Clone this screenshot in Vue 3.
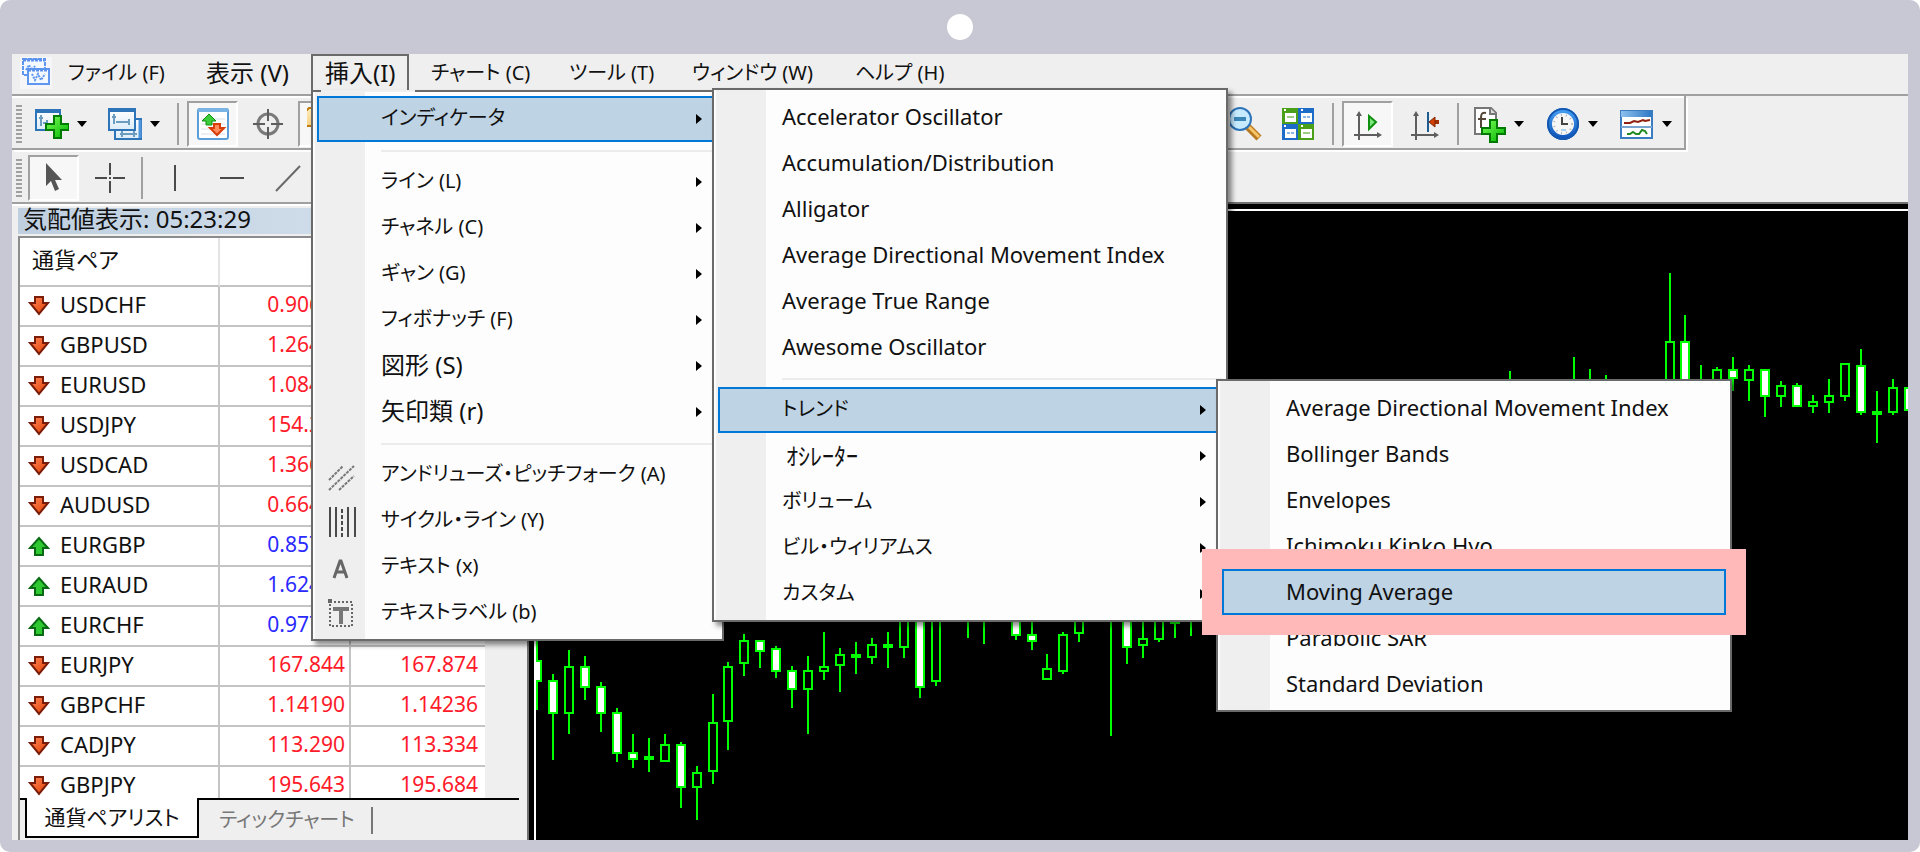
<script setup>
const menus = ['ファイル (F)', '表示 (V)', '挿入(I)', 'チャート (C)', 'ツール (T)', 'ウィンドウ (W)', 'ヘルプ (H)']

const insertMenu = [
  { label: 'インディケータ', sub: true, active: true },
  { sep: true },
  { label: 'ライン (L)', sub: true },
  { label: 'チャネル (C)', sub: true },
  { label: 'ギャン (G)', sub: true },
  { label: 'フィボナッチ (F)', sub: true },
  { label: '図形 (S)', sub: true },
  { label: '矢印類 (r)', sub: true },
  { sep: true },
  { label: 'アンドリューズ・ピッチフォーク (A)', icon: 'pitchfork' },
  { label: 'サイクル・ライン (Y)', icon: 'cycle' },
  { label: 'テキスト (x)', icon: 'letter' },
  { label: 'テキストラベル (b)', icon: 'label' },
]

const indicatorMenu = [
  { label: 'Accelerator Oscillator' },
  { label: 'Accumulation/Distribution' },
  { label: 'Alligator' },
  { label: 'Average Directional Movement Index' },
  { label: 'Average True Range' },
  { label: 'Awesome Oscillator' },
  { sep: true },
  { label: 'トレンド', sub: true, active: true },
  { label: 'ｵｼﾚｰﾀｰ', sub: true, small: true },
  { label: 'ボリューム', sub: true },
  { label: 'ビル・ウィリアムス', sub: true },
  { label: 'カスタム', sub: true },
]

const trendMenu = [
  'Average Directional Movement Index',
  'Bollinger Bands',
  'Envelopes',
  'Ichimoku Kinko Hyo',
  'Moving Average',
  'Parabolic SAR',
  'Standard Deviation',
]

// kanji labels are set larger than katakana labels
const script = (text) => (/[\u4e00-\u9fff]/.test(text) ? 'kanji' : /[\u30a0-\u30ff]/.test(text) ? 'kana' : '')

const toolsLeft = [
  { icon: 'newchart', name: '新規チャート', split: true, w: 73 },
  { icon: 'profile', name: '組表示', split: true, w: 73 },
  { sep: true },
  { icon: 'market', name: '気配値表示', on: true, w: 51 },
  { icon: 'target', name: 'データウィンドウ', w: 60 },
  { icon: 'folder', name: 'ナビゲーター', on: true, w: 51 },
]
const toolsRight = [
  { icon: 'zoomout', name: '縮小', w: 50 },
  { icon: 'tile', name: '整列', w: 52 },
  { sep: true, wide: true },
  { icon: 'autoscroll', name: '自動スクロール', on: true, w: 51 },
  { icon: 'shift', name: 'チャートシフト', w: 63 },
  { sep: true },
  { icon: 'indicators', name: 'インディケータリスト', split: true, w: 74 },
  { icon: 'clock', name: '周期設定', split: true, w: 74 },
  { icon: 'template', name: '定型チャート', split: true, w: 70 },
]
const drawTools = [
  { icon: 'cursor', name: 'カーソル', on: true, w: 51 },
  { icon: 'cross', name: '十字カーソル', w: 61 },
  { sep: true },
  { icon: 'vline', name: '垂直線', w: 48 },
  { icon: 'hline', name: '水平線', w: 66 },
  { icon: 'dline', name: 'トレンドライン', w: 46 },
]

const quotes = [
  ['USDCHF', '0.90645', '0.90672', 0],
  ['GBPUSD', '1.26482', '1.26510', 0],
  ['EURUSD', '1.08415', '1.08432', 0],
  ['USDJPY', '154.242', '154.260', 0],
  ['USDCAD', '1.36645', '1.36670', 0],
  ['AUDUSD', '0.66425', '0.66448', 0],
  ['EURGBP', '0.85712', '0.85734', 1],
  ['EURAUD', '1.62415', '1.62450', 1],
  ['EURCHF', '0.97741', '0.97773', 1],
  ['EURJPY', '167.844', '167.874', 0],
  ['GBPCHF', '1.14190', '1.14236', 0],
  ['CADJPY', '113.290', '113.334', 0],
  ['GBPJPY', '195.643', '195.684', 0],
]

// slot, high, low, body top, body bottom, kind (w: filled, h: hollow, d: doji, l: wick only)
const candles = [
  [-1, 640, 710, 660, 682, 'w'], [0, 674, 760, 680, 714, 'w'], [1, 650, 734, 666, 714, 'h'],
  [2, 656, 700, 666, 688, 'w'], [3, 682, 732, 686, 714, 'w'], [4, 708, 762, 712, 754, 'w'],
  [5, 734, 768, 752, 760, 'w'], [6, 738, 772, 756, 760, 'd'], [7, 734, 762, 744, 762, 'h'],
  [8, 742, 808, 744, 788, 'w'], [9, 766, 820, 772, 788, 'h'], [10, 694, 784, 722, 772, 'h'],
  [11, 662, 750, 666, 722, 'h'], [12, 634, 676, 640, 664, 'h'], [13, 640, 668, 640, 652, 'w'],
  [14, 646, 678, 648, 672, 'w'], [15, 666, 708, 670, 690, 'w'], [16, 656, 734, 670, 690, 'h'],
  [17, 632, 680, 666, 672, 'h'], [18, 648, 692, 654, 666, 'h'], [19, 642, 674, 654, 658, 'd'],
  [20, 638, 664, 644, 658, 'h'], [21, 632, 668, 644, 648, 'd'], [22, 600, 658, 600, 648, 'h'],
  [23, 600, 698, 600, 688, 'w'], [24, 600, 686, 600, 682, 'h'], [26, 600, 638, 0, 0, 'l'],
  [27, 600, 644, 0, 0, 'l'], [29, 600, 640, 600, 636, 'w'], [30, 600, 650, 634, 642, 'w'],
  [31, 654, 680, 668, 680, 'h'], [32, 632, 674, 634, 672, 'h'], [33, 600, 642, 600, 634, 'h'],
  [35, 600, 736, 0, 0, 'l'], [36, 600, 664, 600, 648, 'w'], [37, 600, 658, 638, 646, 'h'],
  [38, 600, 642, 600, 640, 'h'], [39, 600, 638, 620, 624, 'd'], [40, 600, 636, 0, 0, 'l'],
  [60, 371, 400, 0, 0, 'l'], [64, 357, 400, 0, 0, 'l'], [65, 369, 400, 0, 0, 'l'],
  [66, 375, 400, 0, 0, 'l'], [70, 273, 400, 341, 395, 'h'], [71, 315, 400, 341, 395, 'w'],
  [72, 365, 400, 0, 0, 'l'], [73, 367, 400, 369, 395, 'h'], [74, 357, 391, 369, 379, 'w'],
  [75, 365, 401, 369, 381, 'h'], [76, 369, 417, 369, 397, 'w'], [77, 381, 407, 385, 397, 'h'],
  [78, 383, 407, 385, 407, 'w'], [79, 395, 413, 401, 407, 'h'], [80, 379, 413, 395, 403, 'h'],
  [81, 363, 401, 363, 397, 'h'], [82, 349, 415, 365, 413, 'w'], [83, 391, 443, 411, 415, 'd'],
  [84, 379, 415, 387, 413, 'h'], [85, 387, 413, 387, 411, 'w'],
].map(([i, hi, lo, top, bot, kind]) => ({ x: Math.round(553 + i * 15.95), hi, lo, top, bot, kind }))
const fills = { w: '#fff', h: '#000', d: '#0f0' }
// upper wick, then lower wick, so that hollow bodies stay empty
const wicks = (c) => (c.kind === 'l' ? [[c.hi, c.lo]] : [[c.hi, c.top], [c.bot, c.lo]])
</script>

<template>
  <svg class="sprite" width="0" height="0" aria-hidden="true">
    <defs>
      <linearGradient id="g-green" x1="0" y1="0" x2="1" y2="1"><stop offset="0" stop-color="#7dff5a" /><stop offset="1" stop-color="#00b400" /></linearGradient>
      <linearGradient id="g-sky" x1="0" y1="0" x2="0" y2="1"><stop offset="0" stop-color="#fff" /><stop offset="1" stop-color="#dcecf8" /></linearGradient>
      <linearGradient id="g-bar" x1="0" y1="0" x2="1" y2="0"><stop offset="0" stop-color="#8cc0ee" /><stop offset="1" stop-color="#2f78c4" /></linearGradient>
      <linearGradient id="g-rim" x1="0" y1="0" x2="0" y2="1"><stop offset="0" stop-color="#4aa3f5" /><stop offset="1" stop-color="#0a50b8" /></linearGradient>
      <linearGradient id="g-red" x1="0" y1="0" x2="1" y2="1"><stop offset="0" stop-color="#ff8a5a" /><stop offset="1" stop-color="#e03c00" /></linearGradient>
      <linearGradient id="g-gold" x1="0" y1="0" x2="1" y2="1"><stop offset="0" stop-color="#fff0c0" /><stop offset="1" stop-color="#f0b850" /></linearGradient>
    </defs>
    <symbol id="i-app" viewBox="0 0 32 32">
      <path d="M0 0h32v32H0z" fill="#f6f6f8" />
      <rect x="3" y="2" width="22" height="16" fill="#f4f8ff" stroke="#5f97f0" stroke-width="2" stroke-dasharray="4 1" /><path d="M3 3h22" stroke="#5a90ee" stroke-width="3" stroke-dasharray="3 1" />
      <path d="M6 13l3-5 3 5 3-4" fill="none" stroke="#5f97f0" stroke-width="2" stroke-dasharray="2 1" />
      <rect x="8" y="12" width="21" height="15" fill="#f4f8ff" stroke="#5f97f0" stroke-width="2" /><path d="M8 13h21" stroke="#5a90ee" stroke-width="3" stroke-dasharray="3 1" />
      <path d="M12 17l3 6 3-6 3 6 4-6" fill="none" stroke="#5f97f0" stroke-width="2" stroke-dasharray="2 1" />
    </symbol>
    <symbol id="i-newchart" viewBox="0 0 34 34">
      <rect x="1" y="3" width="24" height="20" fill="url(#g-sky)" stroke="#2e74b8" stroke-width="2" /><path d="M1 4h24" stroke="#2e74b8" stroke-width="4" />
      <path d="M6 8v11M4 11h4M8 16h5M12 13v6" stroke="#6c9cc0" stroke-width="2" />
      <path d="M19 9h7v8h8v6h-8v8h-7v-8h-8v-6h8z" fill="url(#g-green)" stroke="#007a00" stroke-width="2" />
    </symbol>
    <symbol id="i-profile" viewBox="0 0 34 34">
      <rect x="7" y="12" width="26" height="20" fill="url(#g-sky)" stroke="#2e74b8" stroke-width="2" /><path d="M32 13v18" stroke="#4d94dc" stroke-width="3" />
      <rect x="1" y="2" width="26" height="21" fill="url(#g-sky)" stroke="#2e74b8" stroke-width="2" /><path d="M1 3h26" stroke="#2e74b8" stroke-width="4" />
      <path d="M6 7v10M4 10h4M8 15h14M21 12v6M12 27h17M14 24v6M26 24v6" stroke="#6c9cc0" stroke-width="2" />
    </symbol>
    <symbol id="i-market" viewBox="0 0 34 34">
      <rect x="2" y="2" width="30" height="30" rx="2" fill="#fff" stroke="#5c9fd8" stroke-width="2" /><path d="M2 3h30" stroke="#7ab4e4" stroke-width="4" />
      <path d="M5 12h24M5 17h24M5 22h24M5 27h24" stroke="#d8dfe6" stroke-width="1" />
      <path d="M13 7l7 7h-4v4h-6v-4H6z" fill="#3ccc3c" stroke="#109010" /><path d="M21 28l-7-7h4v-4h6v4h4z" fill="#ff8a5a" stroke="#d83c08" stroke-width="2" />
    </symbol>
    <symbol id="i-target" viewBox="0 0 34 34">
      <circle cx="17" cy="17" r="10" fill="none" stroke="#7a7a7a" stroke-width="3" /><path d="M17 2v12M17 20v12M2 17h12M20 17h12" stroke="#5e5e5e" stroke-width="2" />
    </symbol>
    <symbol id="i-folder" viewBox="0 0 34 34">
      <path d="M-2 5l4-4h8l4 4h15v14H-2z" fill="url(#g-gold)" stroke="#bf7a10" stroke-width="2" />
    </symbol>
    <symbol id="i-zoomout" viewBox="0 0 34 34">
      <path d="M18 20l11 11" stroke="#b87820" stroke-width="7" /><path d="M19 20l10 10" stroke="#f8c468" stroke-width="3" />
      <circle cx="10" cy="12" r="11" fill="#c6eaff" stroke="#2e74b8" stroke-width="2" /><path d="M4 12h12" stroke="#3a86b8" stroke-width="4" />
    </symbol>
    <symbol id="i-tile" viewBox="0 0 34 34">
      <path d="M1 1h16v16H1zM17 17h16v16H17z" fill="#4aa018" /><path d="M17 1h16v16H17zM1 17h16v16H1z" fill="#1c6cc8" />
      <path d="M4 6h11v9H4zM20 6h11v9H20zM4 22h11v9H4zM20 22h11v9H20z" fill="#fff" />
      <path d="M6 10h7M22 26h7" stroke="#9ccc84" stroke-width="2" /><path d="M22 10h7M6 26h7" stroke="#88b8ec" stroke-width="2" stroke-dasharray="3 1" />
      <path d="M3 3h2M20 3h2M3 19h2M20 19h2" stroke="#fff" stroke-width="2" />
    </symbol>
    <symbol id="i-autoscroll" viewBox="0 0 34 34">
      <path d="M8 33V7M3 28h26" stroke="#5e5e5e" stroke-width="2" /><path d="M8 4l3 5H5zM31 28l-5-3v6z" fill="#5e5e5e" /><path d="M18 9l7 6-7 7z" fill="#7ce87c" stroke="#109010" stroke-width="2" />
    </symbol>
    <symbol id="i-shift" viewBox="0 0 34 34">
      <path d="M8 33V7M3 28h26" stroke="#5e5e5e" stroke-width="2" /><path d="M8 4l3 5H5zM31 28l-5-3v6z" fill="#5e5e5e" /><path d="M20 5v20" stroke="#1c5c90" stroke-width="2" /><path d="M31 15h-6" stroke="#a03000" stroke-width="4" /><path d="M21 15l6-5v10z" fill="#d04000" stroke="#802000" />
    </symbol>
    <symbol id="i-indicators" viewBox="0 0 34 38">
      <path d="M3 3h16l5 5v21H3z" fill="#fff" stroke="#777" stroke-width="2" /><path d="M18 3v6h6" fill="#ddd" stroke="#777" stroke-width="2" />
      <path d="M14 8c-5-1-5 2-5 6v9M6 14h8" fill="none" stroke="#554838" stroke-width="2" />
      <path d="M18 15h7v8h8v6h-8v8h-7v-8h-8v-6h8z" fill="url(#g-green)" stroke="#007a00" stroke-width="2" />
    </symbol>
    <symbol id="i-clock" viewBox="0 0 34 34">
      <circle cx="17" cy="17" r="16" fill="url(#g-rim)" /><circle cx="17" cy="17" r="15" fill="none" stroke="#1458b0" stroke-width="2" /><circle cx="17" cy="17" r="11" fill="#f6f6f6" />
      <circle cx="17" cy="17" r="9" fill="none" stroke="#b4b4b4" stroke-width="2" stroke-dasharray="1 4" /><path d="M16 10v7h6" fill="none" stroke="#444" stroke-width="2" /><path d="M15 23h5" stroke="#a8d4f4" stroke-width="2" />
    </symbol>
    <symbol id="i-template" viewBox="0 0 34 34">
      <rect x="1" y="4" width="31" height="27" fill="#fff" stroke="#3c7cc0" stroke-width="2" /><path d="M1 4h31v6H1z" fill="url(#g-bar)" /><path d="M1 20h31" stroke="#7aa4d0" stroke-width="2" />
      <path d="M4 16h6l4-2 4 1 5-2 2 1 5-1" fill="none" stroke="#902010" stroke-width="2" /><path d="M7 27h3l3-2 3 2h3l3-4 3 1 2 3" fill="none" stroke="#208a20" stroke-width="2" />
    </symbol>
    <symbol id="i-cursor" viewBox="0 0 34 34">
      <path d="M9 2v23l5-5 4 10 4-2-4-9h7z" fill="#555" />
    </symbol>
    <symbol id="i-cross" viewBox="0 0 34 34">
      <path d="M17 2v12M17 20v12M2 17h12M20 17h12M16 17h2" stroke="#4a4a4a" stroke-width="2" />
    </symbol>
    <symbol id="i-vline" viewBox="0 0 34 34"><path d="M17 4v26" stroke="#4a4a4a" stroke-width="2" /></symbol>
    <symbol id="i-hline" viewBox="0 0 34 34"><path d="M5 17h24" stroke="#4a4a4a" stroke-width="2" /></symbol>
    <symbol id="i-dline" viewBox="0 0 34 34"><path d="M5 30L29 5" stroke="#6a6a6a" stroke-width="2" /></symbol>
    <symbol id="i-pitchfork" viewBox="0 0 34 34"><path d="M4 22L18 8M4 32L29 8M14 32L29 18" stroke="#777" stroke-width="2" stroke-dasharray="3 1" /></symbol>
    <symbol id="i-cycle" viewBox="0 0 34 34"><path d="M5 3v30M11 3v30M23 3v30M30 3v30" stroke="#4a4a4a" stroke-width="2" /><path d="M17 5v28" stroke="#4a4a4a" stroke-width="2" stroke-dasharray="4 2" /></symbol>
    <symbol id="i-letter" viewBox="0 0 34 34"><path d="M9 28l6-17h1l6 17M11 22h9" fill="none" stroke="#666" stroke-width="3" /></symbol>
    <symbol id="i-label" viewBox="0 0 34 34">
      <rect x="5" y="6" width="22" height="24" fill="none" stroke="#666" stroke-width="2" stroke-dasharray="2 2" /><path d="M3 3h4v4H3z" fill="#666" /><path d="M8 13h16M16 13v15" stroke="#777" stroke-width="4" />
    </symbol>
    <symbol id="i-down" viewBox="0 0 24 22"><path d="M8 2h8v6h5L12 19 3 8h5z" fill="url(#g-red)" stroke="#7a1c08" stroke-width="2" /></symbol>
    <symbol id="i-up" viewBox="0 0 24 22"><path d="M8 20h8v-7h5L12 3 3 13h5z" fill="#30c830" stroke="#0a6a14" stroke-width="2" /></symbol>
  </svg>

  <div class="frame">
    <span class="camera"></span>
    <div class="window">
      <nav class="menubar">
        <svg class="logo" width="32" height="32"><use href="#i-app" /></svg>
        <div v-for="m in menus" :key="m" class="entry" :class="{ open: m === '挿入(I)' }">
          <button type="button" class="entry-btn" :class="script(m)">{{ m }}</button>
          <ul v-if="m === '挿入(I)'" class="menu menu-insert">
            <li v-for="(it, i) in insertMenu" :key="i" :class="it.sep ? 'rule' : 'row'">
              <button v-if="!it.sep" type="button" class="item" :class="{ active: it.active }">
                <span class="gut"><svg v-if="it.icon" width="34" height="34"><use :href="'#i-' + it.icon" /></svg></span>
                <span class="label" :class="script(it.label)">{{ it.label }}</span>
                <i v-if="it.sub" class="tri"></i>
              </button>
              <ul v-if="it.active" class="menu menu-indicator">
                <li v-for="(s, j) in indicatorMenu" :key="j" :class="s.sep ? 'rule' : 'row'">
                  <button v-if="!s.sep" type="button" class="item" :class="{ active: s.active }">
                    <span class="gut"></span>
                    <span class="label" :class="s.small ? 'half' : script(s.label)">{{ s.label }}</span>
                    <i v-if="s.sub" class="tri"></i>
                  </button>
                  <ul v-if="s.active" class="menu menu-trend">
                    <li v-for="t in trendMenu" :key="t" class="row">
                      <button type="button" class="item" :class="{ 'active marked': t === 'Moving Average' }">
                        <span class="gut"></span>
                        <span class="label">{{ t }}</span>
                      </button>
                    </li>
                  </ul>
                </li>
              </ul>
            </li>
          </ul>
        </div>
      </nav>

      <div class="toolbar main-tools">
        <div class="tools left">
          <i class="grip"></i>
          <template v-for="(t, i) in toolsLeft" :key="i">
            <i v-if="t.sep" class="sep"></i>
            <button v-else type="button" class="tool" :class="{ on: t.on, split: t.split }" :style="{ width: t.w + 'px' }" :aria-label="t.name">
              <svg width="34" height="34"><use :href="'#i-' + t.icon" /></svg><i v-if="t.split" class="caret"></i>
            </button>
          </template>
        </div>
        <div class="tools">
          <template v-for="(t, i) in toolsRight" :key="i">
            <i v-if="t.sep" class="sep" :class="{ wide: t.wide }"></i>
            <button v-else type="button" class="tool" :class="{ on: t.on, split: t.split }" :style="{ width: t.w + 'px' }" :aria-label="t.name">
              <svg width="34" :height="t.icon === 'indicators' ? 38 : 34"><use :href="'#i-' + t.icon" /></svg><i v-if="t.split" class="caret"></i>
            </button>
          </template>
        </div>
      </div>
      <div class="toolbar draw-tools">
        <i class="grip"></i>
        <template v-for="(t, i) in drawTools" :key="i">
          <i v-if="t.sep" class="sep"></i>
          <button v-else type="button" class="tool" :class="{ on: t.on }" :style="{ width: t.w + 'px' }" :aria-label="t.name">
            <svg width="34" height="34"><use :href="'#i-' + t.icon" /></svg>
          </button>
        </template>
      </div>

      <div class="work">
        <aside class="watch">
          <div class="title">気配値表示: 05:23:29</div>
          <div class="grid">
            <table>
              <thead><tr><th class="c-sym">通貨ペア</th><th class="c-bid">Bid</th><th class="c-ask">Ask</th></tr></thead>
              <tbody>
                <tr v-for="q in quotes" :key="q[0]" :class="q[3] ? 'up' : 'dn'">
                  <td class="sym"><span><svg width="24" height="22"><use :href="q[3] ? '#i-up' : '#i-down'" /></svg>{{ q[0] }}</span></td>
                  <td>{{ q[1] }}</td>
                  <td>{{ q[2] }}</td>
                </tr>
              </tbody>
            </table>
          </div>
          <div class="tabs">
            <i class="lead"></i>
            <button type="button" class="tab current">通貨ペアリスト</button>
            <div class="rest"><button type="button" class="tab">ティックチャート</button><i class="bar"></i></div>
          </div>
        </aside>
        <section class="chart">
          <div class="pane">
            <svg width="100%" height="100%" shape-rendering="crispEdges">
              <g transform="translate(-536 -211)" stroke="#0f0" stroke-width="2">
                <g v-for="c in candles" :key="c.x">
                  <line v-for="w in wicks(c)" :key="w[0]" :x1="c.x" :x2="c.x" :y1="w[0]" :y2="w[1]" />
                  <rect v-if="c.kind !== 'l'" :x="c.x - 4" :y="c.top + 1" width="8" :height="c.bot - c.top - 2" :fill="fills[c.kind]" />
                </g>
              </g>
            </svg>
          </div>
        </section>
      </div>
    </div>
  </div>
</template>

<style>
body {
  background: #fff;
}
</style>

<style scoped>
* {
  box-sizing: border-box;
}
button {
  border: 0;
  padding: 0;
  margin: 0;
  background: none;
  font: inherit;
  color: inherit;
  text-align: left;
  white-space: nowrap;
}
svg {
  display: block;
  flex: none;
}
.sprite {
  position: absolute;
}
.frame {
  height: 100vh;
  padding: 0 12px 12px;
  display: flex;
  flex-direction: column;
  background: #c8c7d4;
  border-radius: 10px;
  font-family: "Noto Sans", "Noto Sans CJK JP", sans-serif;
  font-feature-settings: "palt";
  font-size: 22px;
  line-height: 30px;
  color: #111;
}
.kana {
  font-size: 20px;
}
.kanji {
  font-size: 24px;
}
.half {
  font-family: "Noto Sans CJK JP", sans-serif;
  font-size: 24px;
  font-feature-settings: normal;
  padding-left: 4px;
}
.camera {
  width: 26px;
  height: 26px;
  margin: 14px auto;
  border-radius: 50%;
  background: #fff;
  flex: none;
}
.window {
  flex: 1;
  min-height: 0;
  display: flex;
  flex-direction: column;
  background: #efefef;
}
.menubar {
  display: grid;
  grid-template-columns: 56px 138px 105px 120px 138px 123px 163px 1fr;
  height: 42px;
  flex: none;
  border-bottom: 2px solid #a0a0a0;
}
.logo {
  margin: 3px 0 0 8px;
}
.entry {
  position: relative;
}
.entry-btn {
  height: 40px;
  padding-bottom: 2px;
}
.open {
  margin-right: 17px;
}
.open .entry-btn {
  width: 98px;
  height: 36px;
  padding: 0 12px;
  border: 2px solid #6a6a6a;
  border-bottom: 0;
}
.menu {
  position: absolute;
  z-index: 5;
  margin: 0;
  padding: 4px 4px 3px;
  list-style: none;
  border: 2px solid #6a6a6a;
  background: linear-gradient(#efefef, #efefef) 2px 0 / 50px 100% no-repeat #fdfdfd;
  box-shadow: 4px 4px 5px rgba(0, 0, 0, 0.45);
}
.menu-insert {
  top: 36px;
  left: 0;
  width: 413px;
}
.menu-insert::before {
  content: "";
  position: absolute;
  top: -2px;
  left: 8px;
  width: 94px;
  height: 2px;
  background: #efefef;
}
.menu-indicator {
  top: -8px;
  left: 395px;
  width: 516px;
}
.menu-trend {
  top: -8px;
  left: 498px;
  width: 516px;
}
.row {
  position: relative;
}
.rule {
  height: 17px;
  margin-left: 64px;
  border-bottom: 7px solid transparent;
  background: linear-gradient(#ececec, #ececec) 0 100% / 100% 2px no-repeat;
  background-clip: padding-box;
}
.item {
  display: flex;
  align-items: center;
  width: 100%;
  height: 46px;
  padding-right: 14px;
  border: 2px solid transparent;
}
.label {
  padding-bottom: 2px;
}
.gut {
  width: 62px;
  padding-left: 6px;
}
.tri {
  margin-left: auto;
  border-left: 6px solid #000;
  border-top: 5px solid transparent;
  border-bottom: 5px solid transparent;
}
.active {
  border-color: #0078d7;
  background: #bed3e4;
}
.marked {
  position: relative;
  z-index: 1;
  outline: 20px solid #ffb9b9;
}
.toolbar {
  display: flex;
  align-items: center;
  flex: none;
}
.main-tools {
  width: 1674px;
  height: 54px;
  padding-top: 3px;
  border: solid #a0a0a0;
  border-width: 0 2px 2px 0;
  box-shadow: 2px 2px 0 #fff, inset 0 2px 0 #fff;
}
.draw-tools {
  height: 52px;
  padding-top: 4px;
}
.tools {
  display: flex;
  align-items: center;
}
.tools.left {
  width: 1210px;
  flex: none;
}
.grip {
  width: 6px;
  height: 38px;
  margin: 0 6px 0 4px;
  background: repeating-linear-gradient(#a0a0a0 0 2px, #efefef 2px 4px);
}
.main-tools .grip {
  margin-right: 8px;
}
.tool {
  display: flex;
  align-items: center;
  justify-content: center;
  height: 46px;
  flex: none;
}
.tool.split {
  justify-content: flex-start;
  gap: 8px;
  padding-left: 5px;
}
.tool.on {
  border: 2px solid #fff;
  border-top-color: #a0a0a0;
  border-left-color: #a0a0a0;
  background: #f7f7f7;
}
.caret {
  border-top: 6px solid #000;
  border-left: 5px solid transparent;
  border-right: 5px solid transparent;
}
.sep {
  width: 2px;
  height: 42px;
  margin: 0 8px 0 1px;
  background: #a0a0a0;
}
.sep.wide {
  margin: 0 8px;
}
.work {
  flex: 1;
  min-height: 0;
  display: flex;
}
.watch {
  width: 515px;
  flex: none;
  display: flex;
  flex-direction: column;
  padding: 4px 8px 0 6px;
  border-top: 2px solid #a0a0a0;
  box-shadow: inset 0 2px 0 #fff;
}
.title {
  height: 26px;
  padding-left: 5px;
  line-height: 22px;
  font-size: 24px;
  background: linear-gradient(90deg, #bfcfdf, #d9e5f1);
  flex: none;
}
.grid {
  flex: 1;
  min-height: 0;
  margin-top: 2px;
  overflow: hidden;
  border: solid #8c8c8c;
  border-width: 2px 0 0 2px;
}
table {
  width: 465px;
  border-collapse: separate;
  border-spacing: 0;
  table-layout: fixed;
  background: #fff;
}
th,
td {
  padding: 0 7px 4px 0;
  text-align: right;
  font-weight: 400;
  border-bottom: 2px solid #c4c4c4;
  border-right: 2px solid #c4c4c4;
}
th {
  height: 49px;
  padding-bottom: 6px;
  border-right-color: #e4e4e4;
}
td {
  height: 40px;
  font-size: 21px;
}
th:last-child,
td:last-child {
  border-right: 0;
}
.c-sym {
  width: 200px;
  padding-left: 12px;
  text-align: left;
}
.c-bid {
  width: 131px;
  padding-right: 3px;
  color: #8a2a1a;
}
td:nth-child(2) {
  padding-right: 4px;
}
.dn td {
  color: #ff1a2a;
}
.up td {
  color: #2a2aff;
}
tr .sym {
  color: #111;
  font-size: 22px;
  text-align: left;
}
.sym span {
  display: flex;
  align-items: center;
  gap: 9px;
  padding-left: 7px;
}
.sym svg {
  margin-top: 4px;
}
.tabs {
  display: flex;
  height: 42px;
  flex: none;
  border-left: 2px solid #8c8c8c;
}
.lead {
  width: 5px;
  border-top: 2px solid #000;
}
.tab {
  color: #777;
  font-size: 20px;
}
.current {
  width: 174px;
  height: 40px;
  text-align: center;
  font-size: 21px;
  color: #111;
  background: #fff;
  border: 2px solid #000;
  border-top: 0;
}
.rest {
  flex: 1;
  display: flex;
  align-items: center;
  gap: 16px;
  padding-left: 20px;
  border-top: 2px solid #000;
}
.bar {
  width: 2px;
  height: 27px;
  background: #777;
}
.chart {
  flex: 1;
  min-width: 0;
  padding: 5px 0 0 5px;
  background: #000;
  border: solid #707070;
  border-width: 2px 0 0 2px;
}
.pane {
  height: 100%;
  border: solid #fff;
  border-width: 2px 0 0 2px;
  overflow: hidden;
}
</style>
